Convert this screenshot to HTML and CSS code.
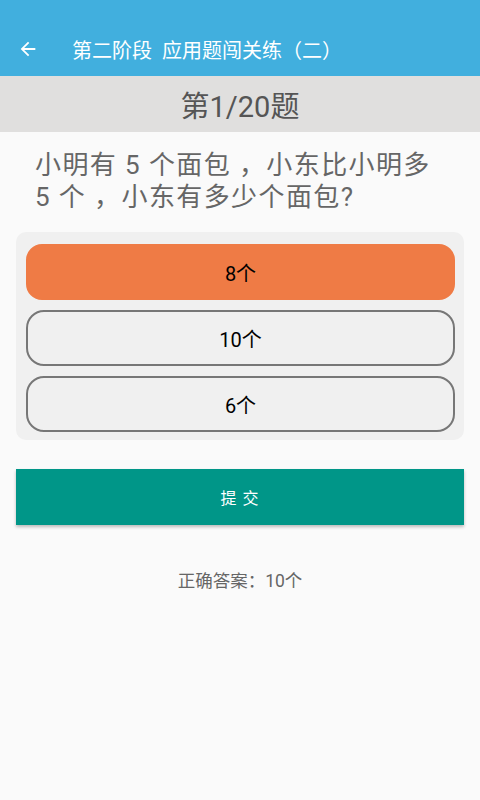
FILE: index.html
```html
<!DOCTYPE html>
<html lang="zh">
<head>
<meta charset="utf-8">
<link rel="stylesheet" href="styles.css">
</head>
<body>
<header class="appbar">
  <svg class="back" viewBox="0 0 24 24"><path d="M20 11H7.83l5.59-5.59L12 4l-8 8 8 8 1.41-1.41L7.83 13H20v-2z" fill="#fff"/></svg>
  <span class="title">第二阶段&nbsp;&nbsp;应用题闯关练（二）</span>
</header>
<div class="progress">第1/20题</div>
<main class="content">
  <p class="question">小明有 5 个面包 ，小东比小明多<br>5 个 ，小东有多少个面包?</p>
  <div class="options">
    <div class="option selected">8个</div>
    <div class="option">10个</div>
    <div class="option">6个</div>
  </div>
  <div class="submit">提 交</div>
  <p class="answer">正确答案：10个</p>
</main>
</body>
</html>
```
FILE: styles.css
```css
html, body {
  margin: 0;
  padding: 0;
}
body {
  width: 480px;
  height: 800px;
  background: #fafafa;
  font-family: Roboto, "Noto Sans CJK SC", sans-serif;
  overflow: hidden;
}
.appbar {
  height: 76px;
  background: #41afde;
  display: flex;
  align-items: center;
  padding-top: 22px;
  box-sizing: border-box;
}
.back {
  margin-left: 17px;
  width: 22px;
  height: 22px;
}
.title {
  margin-left: 33px;
  color: #fff;
  font-size: 20px;
}
.progress {
  height: 56px;
  background: #e0dfde;
  color: #555;
  font-size: 29px;
  display: flex;
  align-items: center;
  justify-content: center;
}
.content {
  padding: 0 16px;
}
.question {
  margin: 17px 0 0 0;
  padding: 0 19px;
  font-size: 26px;
  line-height: 32px;
  color: #666;
  letter-spacing: 1.4px;
  white-space: nowrap;
}
.options {
  margin-top: 19px;
  background: #f0f0f0;
  border-radius: 10px;
  padding: 12px 9px 8px 10px;
  display: flex;
  flex-direction: column;
  gap: 10px;
}
.option {
  height: 56px;
  box-sizing: border-box;
  border: 2px solid #777;
  border-radius: 18px;
  display: flex;
  align-items: center;
  justify-content: center;
  font-size: 20px;
  color: #000;
}
.option.selected {
  background: #ef7b45;
  border-color: #ef7b45;
  border-radius: 16px;
}
.submit {
  margin-top: 29px;
  height: 56px;
  background: #009688;
  color: #fff;
  font-size: 16px;
  display: flex;
  align-items: center;
  justify-content: center;
  box-shadow: 0 2px 3px rgba(0,0,0,0.25);
  letter-spacing: 1px;
}
.answer {
  margin: 45px 0 0 0;
  text-align: center;
  color: #666;
  font-size: 17.5px;
  line-height: 22px;
}
```
